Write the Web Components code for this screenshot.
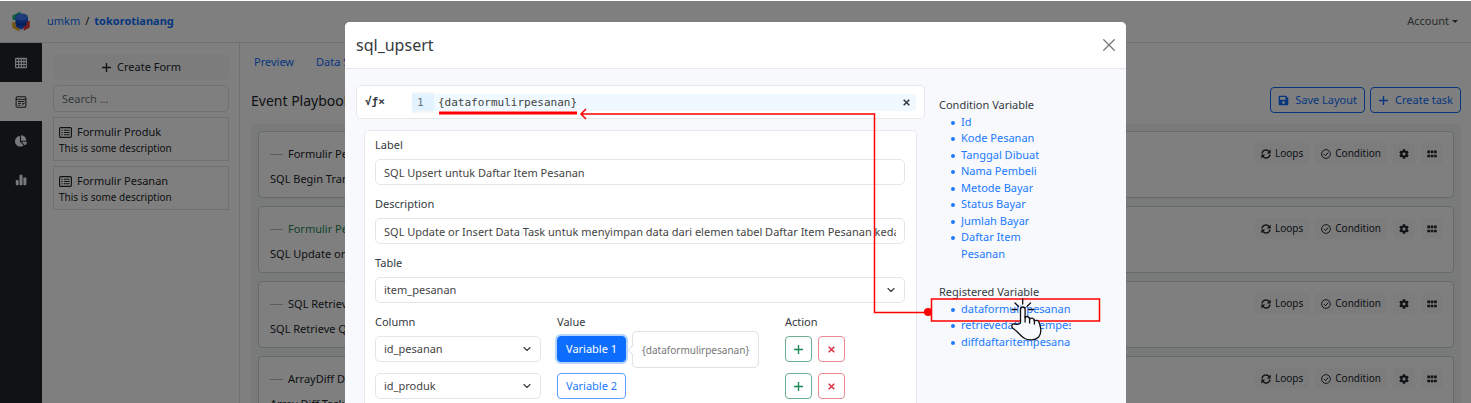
<!DOCTYPE html>
<html lang="id">
<head>
<meta charset="utf-8">
<title>umkm / tokorotianang</title>
<style>
html,body{margin:0;height:100%;overflow:hidden;background:#fff}
body{font:11px/1.5 "Noto Sans",sans-serif;color:#212529;--line:#dee2e6;--blue:#0d6efd}
</style>
</head>
<body>
<app-shell></app-shell>
<script>
const BASE = `:host,*{box-sizing:border-box}button,input,select{font:inherit;color:inherit;margin:0}a{color:var(--blue);text-decoration:none}`;

function define(name, html, setup) {
  const template = document.createElement('template');
  template.innerHTML = html;
  customElements.define(name, class extends HTMLElement {
    connectedCallback() {
      if (this.shadowRoot) return;
      const root = this.attachShadow({mode: 'open'});
      root.append(template.content.cloneNode(true));
      if (setup) setup.call(this, root);
    }
  });
}

const ICONS = {
  logo: ['0 0 18 21', '<path fill="#14b87a" d="M.5 4.500 8.500.5v3.500L4 6.500v3L.5 8.500z"/><path fill="#1455d9" d="M9 3l7 3v9l-7 4.500-5.500-3.500V6z"/><ellipse cx="9.700" cy="6" rx="6.300" ry="3.400" fill="#3f78f0"/><path fill="#0b3ca8" d="M3.500 10.500c3 2.500 9 2.500 12 0v2.200c-3 2.500-9 2.500-12 0z"/><path fill="#f0a818" d="M.3 10.500l3.200 1.500v3.500l3.500 2v3L.3 16.500z"/><path fill="#e23a32" d="M17.700 9.500v7L11.500 20v-4l3-2v-3z"/><path fill="#eee" d="M7 17.500l2 1 2.500-1.500V20L9 21l-2-.8z"/>'],
  table: ['0 0 16 16', '<path fill-rule="evenodd" d="M1.500 1h13A1.500 1.500 0 0 1 16 2.500v11a1.500 1.500 0 0 1-1.500 1.500h-13A1.500 1.500 0 0 1 0 13.500v-11A1.500 1.500 0 0 1 1.500 1zM1.600 3v2.300h2.400V3zm4 0v2.300h2V3zm3.600 0v2.300h2V3zm3.400 0v2.300h2V3zM1.600 6.900v2.300h2.400V6.900zm4 0v2.300h2V6.900zm3.600 0v2.300h2V6.900zm3.400 0v2.300h2V6.900zM1.600 10.800v2.400h2.400v-2.400zm4 0v2.400h2v-2.400zm3.600 0v2.400h2v-2.400zm3.400 0v2.400h2v-2.400z"/>'],
  form: ['0 0 16 16', '<rect x="1.500" y="1" width="13" height="14" rx="1.500" fill="none" stroke="currentColor" stroke-width="1.400"/><path fill="none" stroke="currentColor" stroke-width="1.300" d="M1.500 4.400h13M4 7.300h8.500M4 9.800h4M4 12.300h3M9.500 12.500l3.500-3.500M9.500 10h2"/>'],
  pie: ['0 0 544 512', '<path d="M527.800 288H290.500l158 158c6 6 15.900 6.500 22.100.7 38.700-36.500 65.300-85.600 73.100-140.900 1.300-9.500-6.300-17.800-15.900-17.800zm-15.800-64.800C503.700 103.700 408.300 8.300 288.800 0c-9.200-.6-16.800 7.100-16.800 16.300V240h223.700c9.200 0 16.900-7.600 16.300-16.800zM224 288V50.700c0-9.600-8.300-17.200-17.800-15.900C87.100 51.600-3.900 155-.1 279.200 3.800 406.700 112 512 239.500 510.400c50.100-.6 96.500-16.800 134.400-43.800 7.800-5.600 8.300-17.100 1.500-23.900z"/>'],
  chart: ['0 0 16 16', '<rect x="1" y="8" width="3.800" height="7" rx="1.200"/><rect x="6" y="1" width="4" height="14" rx="1.200"/><rect x="11.200" y="4.500" width="4" height="10.500" rx="1.200"/>'],
  plus: ['0 0 16 16', '<path d="M7 1.500h2V7h5.500v2H9v5.500H7V9H1.500V7H7z"/>'],
  list: ['0 0 16 16', '<rect x=".7" y="2" width="14.600" height="12" rx="1.500" fill="none" stroke="currentColor" stroke-width="1.400"/><path d="M3 4.500h1.600v1.300H3zm3 0h7.200v1.300H6zM3 7.300h1.600v1.300H3zm3 0h7.200v1.300H6zM3 10.100h1.600v1.300H3zm3 0h7.200v1.300H6z"/>'],
  save: ['0 0 448 512', '<path d="M433.900 129.900l-83.900-83.900A48 48 0 0 0 316.100 32H48C21.500 32 0 53.500 0 80v352c0 26.500 21.500 48 48 48h352c26.500 0 48-21.500 48-48V163.900a48 48 0 0 0-14.100-34zM224 416c-35.300 0-64-28.700-64-64s28.700-64 64-64 64 28.700 64 64-28.700 64-64 64zm96-304.500V212c0 6.600-5.400 12-12 12H76c-6.600 0-12-5.400-12-12V108c0-6.600 5.400-12 12-12h228.500c3.200 0 6.200 1.300 8.500 3.500l3.500 3.500a12 12 0 0 1 3.500 8.500z"/>'],
  loop: ['0 0 16 16', '<path fill="none" stroke="currentColor" stroke-width="2.200" d="M1.700 7.300A6.200 6.200 0 0 1 12.800 4M14.300 8.700A6.200 6.200 0 0 1 3.200 12"/><path d="M15.500.8v6.400H9.200zM.5 15.200V8.800h6.300z"/>'],
  check: ['0 0 16 16', '<circle cx="8" cy="8" r="7" fill="none" stroke="currentColor" stroke-width="1.500"/><path fill="none" stroke="currentColor" stroke-width="1.600" d="M4.800 8.200 7.200 10.600 11.500 5.700"/>'],
  cog: ['0 0 512 512', '<path d="M487.400 315.700l-42.600-24.600c4.300-23.200 4.300-47 0-70.200l42.600-24.600c4.900-2.800 7.100-8.600 5.500-14-11.100-35.600-30-67.800-54.700-94.600-3.800-4.100-10-5.100-14.800-2.300L380.800 110c-17.900-15.400-38.500-27.300-60.800-35.100V25.800c0-5.600-3.900-10.500-9.400-11.700-36.700-8.200-74.300-7.800-109.200 0-5.500 1.200-9.400 6.100-9.400 11.700V75c-22.200 7.900-42.800 19.800-60.800 35.100L88.700 85.500c-4.900-2.800-11-1.900-14.800 2.300-24.700 26.700-43.600 58.900-54.700 94.600-1.700 5.400.6 11.200 5.500 14L67.300 221c-4.300 23.200-4.300 47 0 70.200l-42.600 24.600c-4.900 2.800-7.100 8.600-5.500 14 11.100 35.600 30 67.800 54.700 94.600 3.800 4.100 10 5.100 14.800 2.300l42.600-24.600c17.900 15.400 38.500 27.300 60.800 35.100v49.200c0 5.600 3.900 10.500 9.400 11.700 36.700 8.200 74.300 7.800 109.200 0 5.500-1.200 9.400-6.100 9.400-11.700v-49.200c22.200-7.900 42.800-19.800 60.800-35.100l42.600 24.600c4.900 2.800 11 1.900 14.800-2.300 24.700-26.700 43.600-58.900 54.700-94.600 1.500-5.500-.7-11.300-5.600-14.100zM256 336c-44.100 0-80-35.900-80-80s35.900-80 80-80 80 35.900 80 80-35.900 80-80 80z"/>'],
  grip: ['0 0 16 16', '<path d="M.5 2.500h4.300v4.300H.5zm5.400 0h4.300v4.300H5.900zm5.400 0h4.300v4.300h-4.300zM.5 9h4.300v4.300H.5zm5.400 0h4.300v4.300H5.900zm5.400 0h4.300v4.300h-4.300z"/>'],
  close: ['0 0 16 16', '<path fill="none" stroke="currentColor" stroke-width="1.700" stroke-linecap="round" d="M1 1l14 14m0-14L1 15"/>'],
  times: ['0 0 16 16', '<path fill="none" stroke="currentColor" stroke-width="2.800" d="M3 3l10 10m0-10L3 13"/>'],
  chevron: ['0 0 16 16', '<path fill="none" stroke="#343a40" stroke-linecap="round" stroke-linejoin="round" stroke-width="2.200" d="m2 5 6 6 6-6"/>']
};
customElements.define('app-icon', class extends HTMLElement {
  connectedCallback() {
    if (this.shadowRoot) return;
    const [box, body] = ICONS[this.getAttribute('name')];
    this.attachShadow({mode: 'open'}).innerHTML =
      `<style>:host{display:inline-flex;flex:none;width:11px;height:11px}svg{width:100%;height:100%;fill:currentColor}</style><svg viewBox="${box}" aria-hidden="true">${body}</svg>`;
  }
});

define('app-header', `<style>${BASE}
:host{display:flex;align-items:center;height:42px;padding:0 13px 0 12px;border-bottom:1px solid var(--line);background:#fff}
app-icon{width:18px;height:21px;margin-right:17px}
nav{display:flex;gap:5px;flex:1}
button{border:0;background:none;padding:0;display:flex;align-items:center;gap:3px;color:#555}
button::after{content:"";border:3px solid transparent;border-top-color:#444;border-bottom:0}
</style><app-icon name="logo"></app-icon>
<nav><a href="#umkm">umkm</a><span>/</span><a href="#toko"><b>tokorotianang</b></a></nav>
<button type="button">Account</button>`);

define('side-rail', `<style>${BASE}
:host{display:flex;flex-direction:column;width:42px;background:#212529;color:#f1f3f5}
a{display:grid;place-items:center;height:39px;color:inherit}
a.on{background:#fff;color:#212529}
app-icon{width:12px;height:12px}
</style><a href="#data" aria-label="Data"><app-icon name="table"></app-icon></a>
<a href="#forms" class="on" aria-label="Forms"><app-icon name="form"></app-icon></a>
<a href="#reports" aria-label="Reports"><app-icon name="pie"></app-icon></a>
<a href="#charts" aria-label="Charts"><app-icon name="chart"></app-icon></a>`);

define('form-card', `<style>${BASE}
:host{display:block;border:1px solid var(--line);padding:6px 5px 4px;font-size:10px;line-height:16px}
div{display:flex;align-items:center;gap:5px;font-size:11px}
app-icon{width:13px;height:13px}
</style><div><app-icon name="list"></app-icon><slot></slot></div>This is some description`);

define('form-list', `<style>${BASE}
:host{display:flex;flex-direction:column;gap:5px;width:198px;padding:11px 10px 0 11px;border-right:1px solid var(--line)}
button{height:26px;border:0;border-radius:4px;background:#f8f9fa;display:flex;align-items:center;justify-content:center;gap:5px}
input{height:27px;border:1px solid var(--line);border-radius:5px;padding:0 8px;background:#fff;width:100%}
input::placeholder{color:#6c757d;opacity:1}
</style><button type="button"><app-icon name="plus"></app-icon>Create Form</button>
<input type="search" placeholder="Search ..." aria-label="Search">
<form-card>Formulir Produk</form-card><form-card>Formulir Pesanan</form-card>`);

define('task-card', `<style>${BASE}
:host{display:flex;justify-content:space-between;align-items:flex-start;height:67px;border:1px solid #ced4da;border-radius:4px;background:#fff;padding:11px 10px 0 11px}
h3{margin:0;font:inherit;line-height:22px;display:flex;align-items:center;gap:5px}
h3::before{content:"";width:13px;height:1px;background:#bbb}
:host([done]) h3{color:#198754}
p{margin:0;line-height:27px}
.tools{display:flex;gap:6px;font-size:10px}
button{height:21px;border:0;border-radius:3px;background:#f8f9fa;padding:0 6px;display:flex;align-items:center;gap:4px}
.tools app-icon{width:10px;height:10px}
</style><div><h3><slot name="title"></slot></h3><p><slot></slot></p></div>
<div class="tools"><button type="button"><app-icon name="loop"></app-icon>Loops</button>
<button type="button"><app-icon name="check"></app-icon>Condition</button>
<button type="button" aria-label="Settings"><app-icon name="cog"></app-icon></button>
<button type="button" aria-label="Move"><app-icon name="grip"></app-icon></button></div>`);

define('task-board', `<style>${BASE}
:host{display:block;flex:1;min-width:0;padding:11px 10px 0 11px}
nav{display:flex;gap:22px;padding:0 3px;line-height:16px}
header{display:flex;align-items:center;gap:5px;height:26px;margin:17px 0 11px}
h1{flex:1;margin:0;font-size:14px;font-weight:400}
header button{height:26px;border:1px solid var(--blue);border-radius:4px;background:none;color:var(--blue);display:flex;align-items:center;gap:6px;padding:0 7px}
.cards{display:flex;flex-direction:column;gap:8px;background:#f3f4f5;padding:7px}
</style><nav><a href="#preview">Preview</a><a href="#source">Data Source</a></nav>
<header><h1>Event Playbook</h1>
<button type="button"><app-icon name="save"></app-icon>Save Layout</button>
<button type="button"><app-icon name="plus"></app-icon>Create task</button></header>
<div class="cards">
<task-card><span slot="title">Formulir Pesanan</span>SQL Begin Transaction</task-card>
<task-card done><span slot="title">Formulir Pesanan</span>SQL Update or Insert</task-card>
<task-card><span slot="title">SQL Retrieve</span>SQL Retrieve Query</task-card>
<task-card><span slot="title">ArrayDiff Data</span>Array Diff Task</task-card></div>`);

define('fx-editor', `<style>${BASE}
:host{display:flex;align-items:center;height:34px;border:1px solid #e6e8eb;border-radius:5px;background:#fff;padding:0 8px;font-family:"DejaVu Sans Mono",monospace}
.fx{width:47px;font-weight:700}
.gutter{width:22px;height:21px;background:#f5f5f5;color:#6c757d;display:flex;align-items:center}
.gutter span{flex:1;line-height:17px;background:#e2f2ff;padding-left:5px}
.line{flex:1;display:flex;align-items:center;background:#f0f9ff;height:17px;padding:0 5px 0 4px}
input{flex:1;min-width:0;border:0;background:none;padding:0;outline:0;height:17px;color:#444}
button{border:0;background:none;padding:0;display:flex}
button app-icon{width:9px;height:9px}
</style><span class="fx">√ƒ×</span><span class="gutter"><span>1</span></span>
<div class="line"><input value="{dataformulirpesanan}" aria-label="Expression"><button type="button" aria-label="Clear"><app-icon name="times"></app-icon></button></div>`);

const FIELD = `
.box{height:26px;width:100%;border:1px solid #e3e5e8;border-radius:5px;background:#fff;padding:0 8px;color:#444;display:block}
select.box{appearance:none}
.select{display:grid;align-items:center}
.select>*{grid-area:1/1}
.select app-icon{justify-self:end;width:8px;height:8px;margin-right:10px;pointer-events:none}`;

define('form-field', `<style>${BASE}${FIELD}
:host{display:flex;flex-direction:column;gap:6px}
label{line-height:16px}
</style><label for="control"></label>`, function (root) {
  root.querySelector('label').textContent = this.getAttribute('label');
  const value = this.getAttribute('value');
  if (this.hasAttribute('select')) {
    const wrap = document.createElement('div');
    wrap.className = 'select';
    wrap.innerHTML = '<select id="control" class="box"><option></option></select><app-icon name="chevron"></app-icon>';
    wrap.querySelector('option').textContent = value;
    root.append(wrap);
  } else {
    const input = document.createElement('input');
    input.id = 'control'; input.className = 'box'; input.value = value;
    root.append(input);
  }
});

define('variable-button', `<style>${BASE}
:host{display:block;position:relative}
button{height:26px;border:1px solid #5c9dfe;border-radius:4px;background:#fff;color:var(--blue);padding:0 8px}
:host([active]) button{background:#0d6efd;border-color:#0d6efd;color:#fff;box-shadow:0 0 0 2px #b6d4fe}
.tip{position:absolute;left:75px;top:-5px;height:37px;padding:0 9px;border:1px solid #dfe1e4;border-radius:5px;background:#fff;color:#777;font-size:10px;line-height:36px;display:none}
.tip::before{content:"";position:absolute;left:-4px;top:14px;width:7px;height:7px;background:#fff;border:1px solid #dfe1e4;border-width:0 0 1px 1px;transform:rotate(45deg)}
:host([active]) .tip{display:block}
</style><button type="button"><slot></slot></button><div class="tip" role="tooltip">{dataformulirpesanan}</div>`);

define('column-table', `<style>${BASE}${FIELD}
:host{display:block}
table{border-collapse:collapse;table-layout:fixed;width:100%}
th{font-weight:400;text-align:left;padding:0 0 6px;line-height:16px}
td{padding:0 0 11px;height:37px;vertical-align:top}
th:nth-child(1){width:182px}th:nth-child(2){width:228px}
td:first-child{padding-right:16px}
.acts{display:flex;gap:6px}
.acts button{width:27px;height:26px;border:1px solid;border-radius:4px;background:#fff;padding:0;display:grid;place-items:center}
.acts .add{color:#198754;border-color:#6bb08f}.acts .del{color:#dc3545;border-color:#ea8891}
.del app-icon{width:9px;height:9px}
</style><table><thead><tr><th>Column</th><th>Value</th><th>Action</th></tr></thead><tbody></tbody></table>`, function (root) {
  root.querySelector('tbody').innerHTML = [['id_pesanan', 'Variable 1', 'active'], ['id_produk', 'Variable 2', '']].map(([column, label, state]) => `
<tr><td><div class="select"><select class="box" aria-label="Column"><option>${column}</option></select><app-icon name="chevron"></app-icon></div></td>
<td><variable-button ${state}>${label}</variable-button></td>
<td><div class="acts"><button type="button" class="add" aria-label="Add"><app-icon name="plus"></app-icon></button><button type="button" class="del" aria-label="Remove"><app-icon name="times"></app-icon></button></div></td></tr>`).join('');
});

define('variable-list', `<style>${BASE}
:host{display:block}
h3{margin:0;font:inherit}
ul{margin:0;padding:0 0 0 12px;color:var(--blue);list-style:none}
:host([wrap]) ul{padding-right:12px}
li{display:flex;gap:6px}
li::before{content:"";flex:none;width:4px;height:4px;margin-top:7px;border-radius:50%;background:currentColor}
a{display:block;min-width:0;overflow:hidden}
</style><h3></h3><ul></ul>`, function (root) {
  root.querySelector('h3').textContent = this.getAttribute('label');
  root.querySelector('ul').innerHTML = this.getAttribute('items').split(',').map(t => `<li><a href="#var">${t}</a></li>`).join('');
});

define('click-guide', `<style>
:host{position:absolute;inset:0;pointer-events:none}
svg{display:block;width:781px;height:381px;overflow:visible}
</style><svg viewBox="345 22 781 381" fill="none" stroke="red" aria-hidden="true">
<path stroke-width="3" d="M439 113h138"/>
<path stroke-width="1.500" d="M581 114h293.500v198.500H928M586 109l-5 5 5 5"/>
<circle cx="928" cy="312" r="4" fill="red" stroke="none"/>
<rect x="931.500" y="299" width="168" height="22" stroke-width="1.500"/>
<g stroke="#111" stroke-width="1.300" stroke-linecap="round" stroke-linejoin="round">
<path fill="#f8f9fc" d="M1020.500 323v-13.500q0-2.500 2.300-2.500t2.300 2.500v8q2-2 4 0l.5 1.500q2.500-2 4.500.5l.3 1.500q3-1.800 4.800 1.500c1.500 5 3 10-.5 14.500-3 3.500-10 3.500-14 1.500-4-2.300-6-6-12-10.500-2-2-.5-4.500 2-4 2 .5 4.500 1 5.800-1z"/>
<path d="M1025.100 317v5M1029.600 318v5M1034.400 320v4M1022.700 299v5M1015 303l3.500 3.500M1030.500 303l-3.500 3.500M1012 309.500h5M1028.500 309.500h5"/></g></svg>`);

define('task-dialog', `<style>${BASE}
:host{display:block;position:relative;width:781px;min-height:500px;background:#f8f9fc;border-radius:5px;overflow:hidden;color:#343a40;--blue:#2079ff}
header{display:flex;align-items:center;justify-content:space-between;height:47px;background:#fff;border-bottom:1px solid #e6e8eb;padding:0 11px}
h2{margin:0;font-size:16px;font-weight:400}
header button{border:0;background:none;padding:0;color:#777;display:flex}
header app-icon{width:12px;height:12px}
.body{display:grid;grid-template-columns:569px 132px;gap:14px;padding:16px 11px}
.panel{display:flex;flex-direction:column;gap:11px;margin:11px 8px 0;padding:6px 11px 11px 10px;border:1px solid #e6e8eb;border-radius:5px;background:#fff}
aside{display:flex;flex-direction:column;gap:22px;padding-top:12px}
</style><header><h2>sql_upsert</h2><button type="button" aria-label="Close"><app-icon name="close"></app-icon></button></header>
<div class="body"><div><fx-editor></fx-editor>
<div class="panel"><form-field label="Label" value="SQL Upsert untuk Daftar Item Pesanan"></form-field>
<form-field label="Description" value="SQL Update or Insert Data Task untuk menyimpan data dari elemen tabel Daftar Item Pesanan kedalam database"></form-field>
<form-field label="Table" value="item_pesanan" select></form-field>
<column-table></column-table></div></div>
<aside><variable-list wrap label="Condition Variable" items="Id,Kode Pesanan,Tanggal Dibuat,Nama Pembeli,Metode Bayar,Status Bayar,Jumlah Bayar,Daftar Item Pesanan"></variable-list>
<variable-list label="Registered Variable" items="dataformulirpesanan,retrievedaftaritempesanan,diffdaftaritempesanan"></variable-list></aside></div>
<click-guide></click-guide>`);

define('app-shell', `<style>
:host{display:block;position:relative;height:100vh;overflow:hidden;padding-top:1px;box-sizing:border-box}
main{display:flex;height:100%}
.backdrop{position:absolute;inset:1px 0 0;background:rgba(0,0,0,.5);display:flex;justify-content:center;align-items:flex-start;padding-top:21px;overflow:hidden}
</style><app-header></app-header><main><side-rail></side-rail><form-list></form-list><task-board></task-board></main>
<div class="backdrop"><task-dialog role="dialog" aria-label="sql_upsert"></task-dialog></div>`);
</script>
</body>
</html>
